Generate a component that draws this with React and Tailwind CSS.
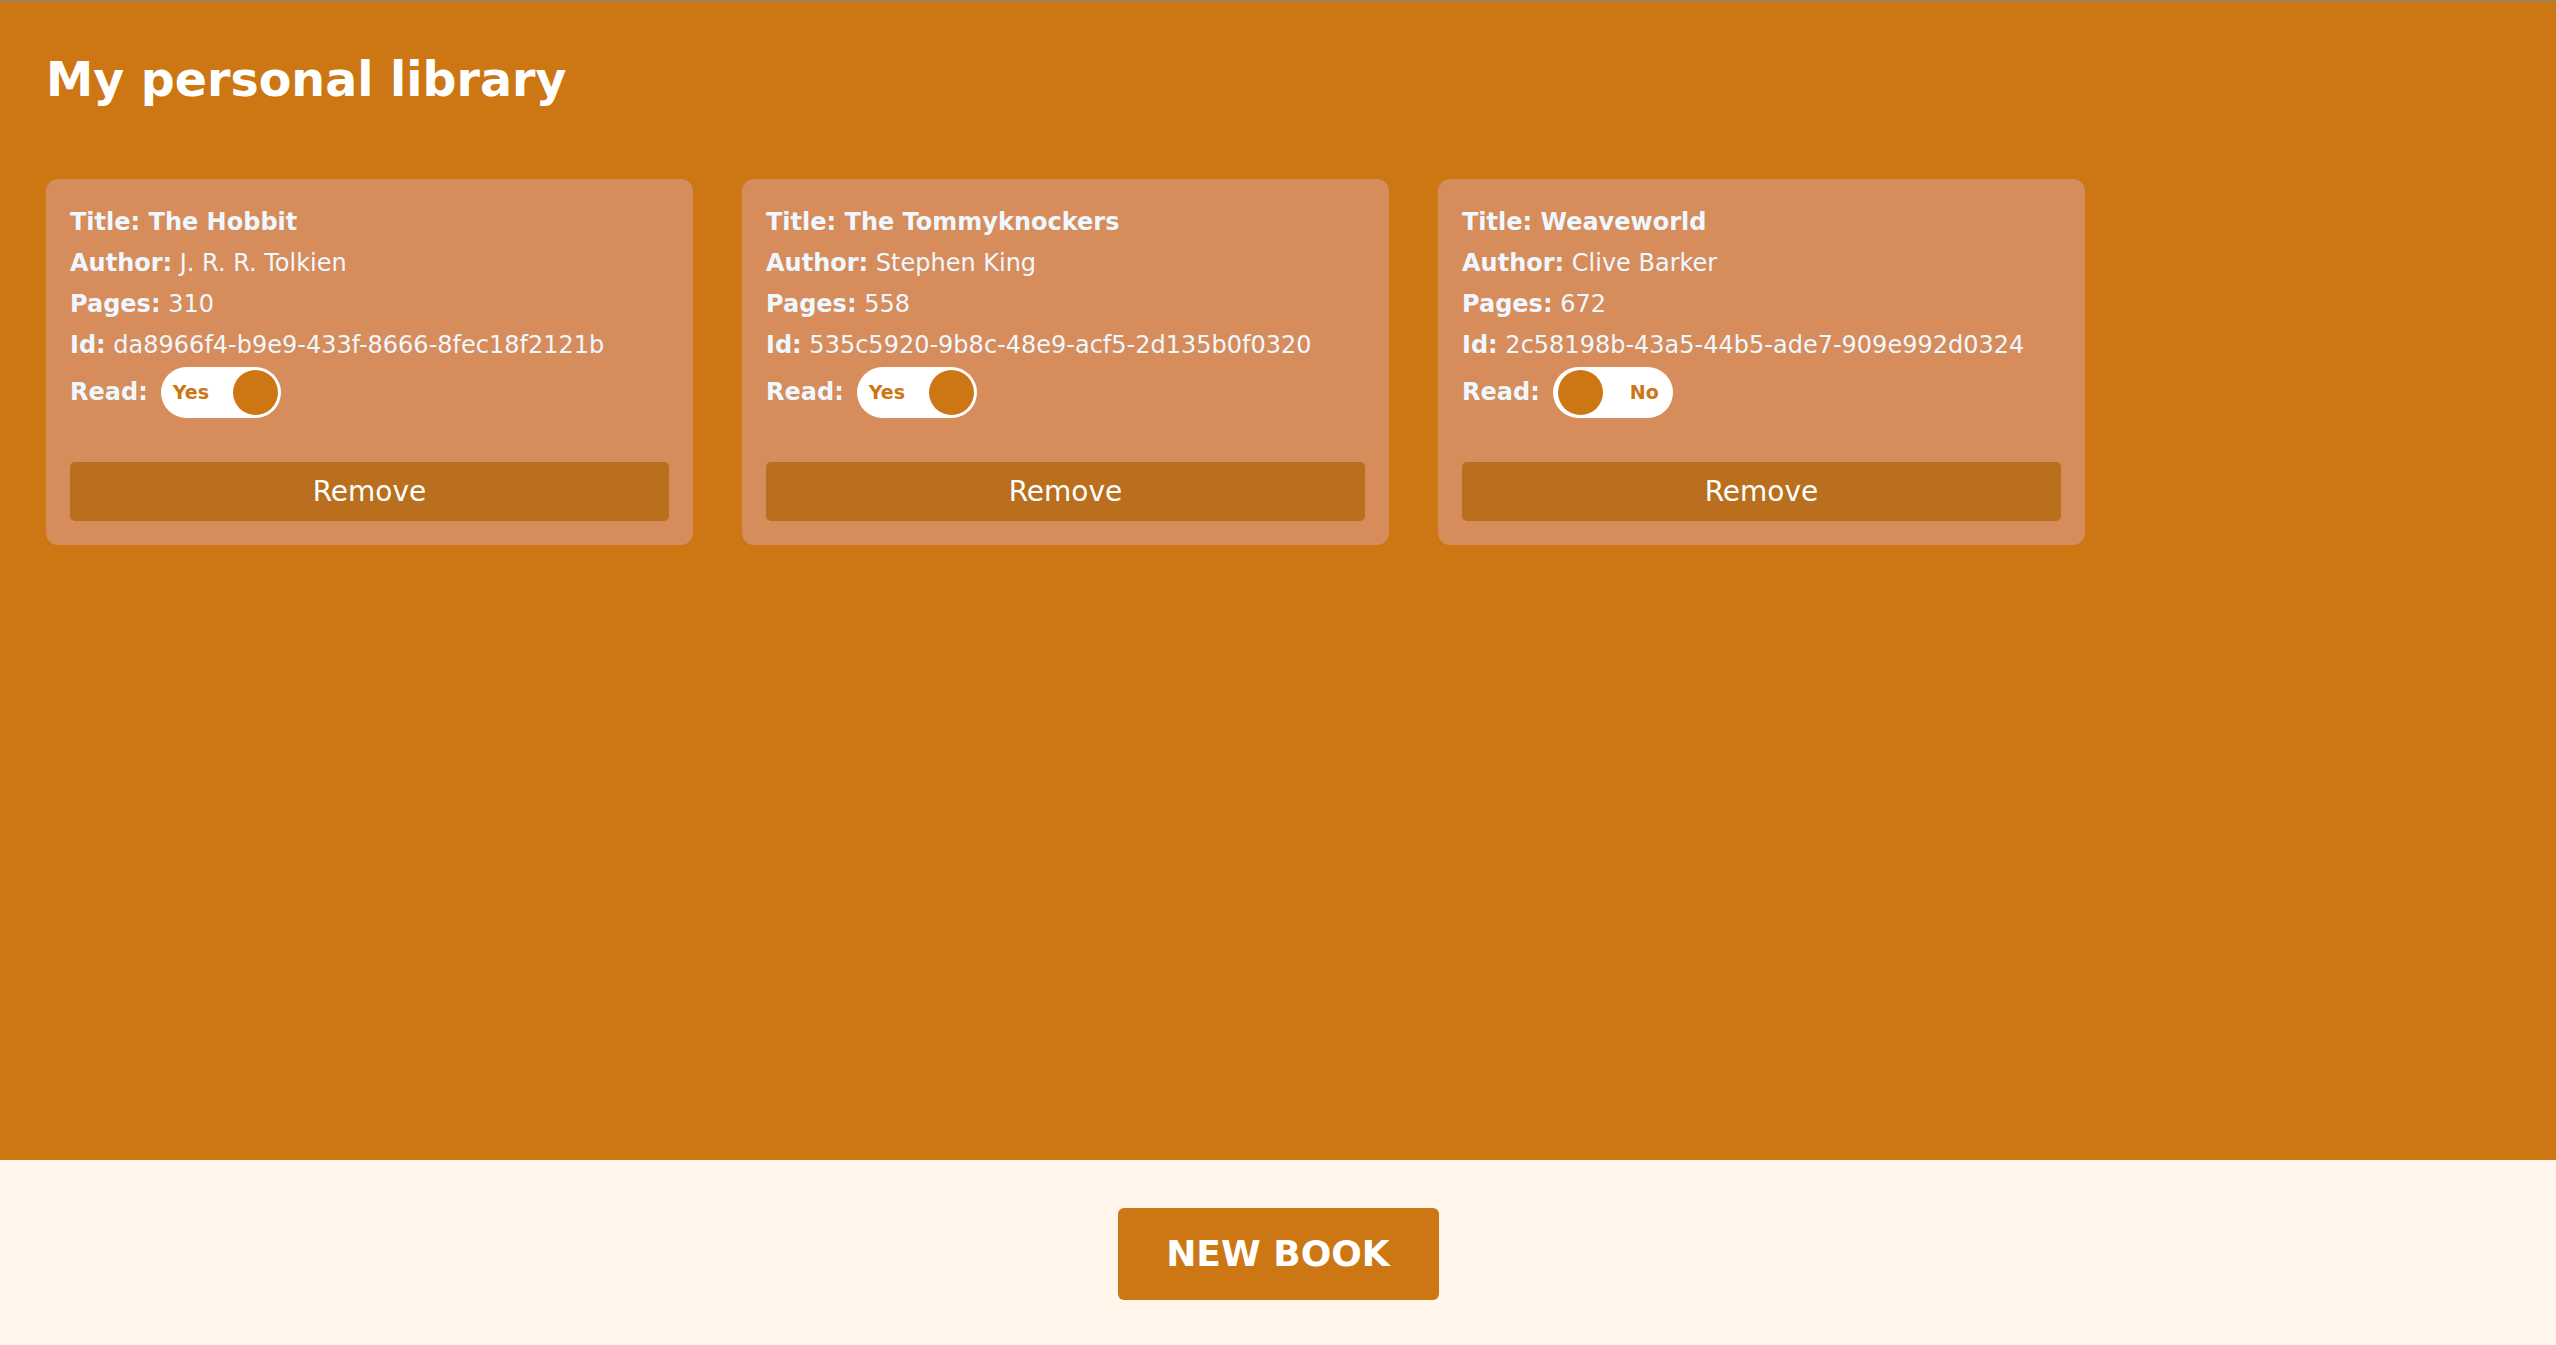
const books = [
  { title: 'The Hobbit', author: 'J. R. R. Tolkien', pages: 310, id: 'da8966f4-b9e9-433f-8666-8fec18f2121b', read: true },
  { title: 'The Tommyknockers', author: 'Stephen King', pages: 558, id: '535c5920-9b8c-48e9-acf5-2d135b0f0320', read: true },
  { title: 'Weaveworld', author: 'Clive Barker', pages: 672, id: '2c58198b-43a5-44b5-ade7-909e992d0324', read: false }
]

function Toggle({ on }) {
  return (
    <div className="ml-[13px] w-[120px] h-[51px] rounded-full bg-white flex items-center justify-between px-[3px]">
      {on ? (
        <>
          <span className="pl-[9px] text-[19px] font-bold text-[#cc7614]">Yes</span>
          <span className="w-[45px] h-[45px] rounded-full bg-[#cc7614]" />
        </>
      ) : (
        <>
          <span className="w-[45px] h-[45px] rounded-full bg-[#cc7614] ml-[2px]" />
          <span className="pr-[11px] text-[19px] font-bold text-[#cc7614]">No</span>
        </>
      )}
    </div>
  )
}

function BookCard({ book }) {
  return (
    <div className="w-[647px] bg-[#d78c5b] rounded-[12px] px-[24px] pt-[23px] pb-[24px] text-[#f0f8ff]">
      <div className="text-[24px] leading-[41px]">
        <div className="font-bold">Title: {book.title}</div>
        <div><span className="font-bold">Author:</span> {book.author}</div>
        <div><span className="font-bold">Pages:</span> {book.pages}</div>
        <div><span className="font-bold">Id:</span> {book.id}</div>
      </div>
      <div className="flex items-center h-[52px]">
        <span className="text-[24px] font-bold">Read:</span>
        <Toggle on={book.read} />
      </div>
      <button className="mt-[44px] w-full h-[59px] rounded-[5px] bg-[#ba6f1e] text-white text-[28px]" style={{ fontFamily: 'inherit' }}>
        Remove
      </button>
    </div>
  )
}

export default function App() {
  return (
    <div className="min-h-screen flex flex-col" style={{ fontFamily: '"DejaVu Sans", Verdana, sans-serif' }}>
      <main className="flex-1 bg-[#cc7614] border-t border-[#808b8c] px-[46px] pt-[51px]">
        <h1 className="text-[47.5px] leading-[56px] font-bold text-white">My personal library</h1>
        <div className="mt-[71px] flex gap-[49px] items-start">
          {books.map(b => <BookCard key={b.id} book={b} />)}
        </div>
      </main>
      <footer className="h-[185px] bg-[#fff5eb] flex items-center justify-center pt-[2px]">
        <button className="w-[321px] h-[92px] rounded-[6px] bg-[#cc7614] text-white text-[36px] font-bold" style={{ fontFamily: 'inherit' }}>
          NEW BOOK
        </button>
      </footer>
    </div>
  )
}
